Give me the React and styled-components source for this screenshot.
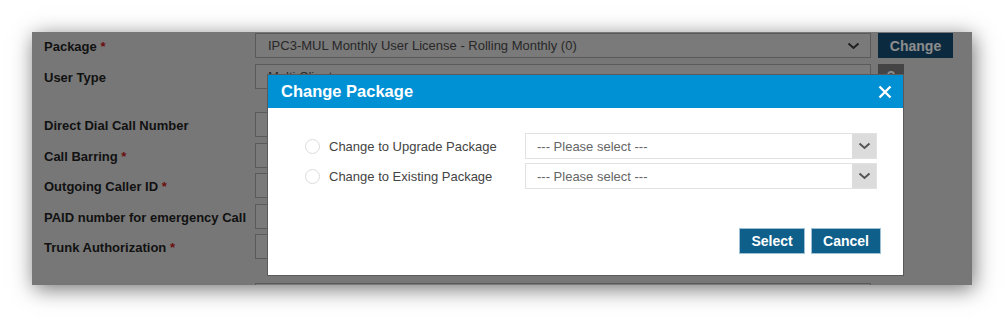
import React from 'react'
import styled, { createGlobalStyle } from 'styled-components'

const Global = createGlobalStyle`
  html, body { margin: 0; padding: 0; background: #fff; }
  body { font-family: "Liberation Sans", Arial, sans-serif; }
`

const Frame = styled.div`
  width: 1004px;
  height: 318px;
  padding: 32px 0 0 32px;
  box-sizing: border-box;
  overflow: hidden;
`

const Panel = styled.div`
  position: relative;
  width: 940px;
  height: 253px;
  background: #d9d9d9;
  box-shadow: 2px 4px 20px rgba(0, 0, 0, 0.55);
  overflow: hidden;
`

const Form = styled.div`
  display: grid;
  grid-template-columns: 204px 616px 82px;
  column-gap: 7px;
  padding: 1px 0 0 12px;
`

const Row = styled.div`
  display: contents;
`

const Label = styled.div`
  height: ${p => (p.tall ? 48.5 : 30.5)}px;
  box-sizing: border-box;
  padding-top: 6px;
  font-size: 13px;
  font-weight: bold;
  color: #1f1f1f;
  line-height: 15px;
  white-space: nowrap;
  span { color: #c31b1b; }
`

const Cell = styled.div`
  height: ${p => (p.tall ? 48.5 : 30.5)}px;
`

const Field = styled.div`
  display: flex;
  align-items: center;
  justify-content: space-between;
  height: 25px;
  box-sizing: border-box;
  border: 1px solid #a4a4a4;
  background: #dedede;
  padding: 0 10px 0 12px;
  font-size: 13px;
  color: #4a4a4a;
`

const DarkButton = styled.div`
  display: flex;
  align-items: center;
  justify-content: center;
  width: ${p => p.w}px;
  height: 25px;
  background: ${p => p.bg};
  color: #fff;
  font-size: 14px;
  font-weight: bold;
`

const Dim = styled.div`
  position: absolute;
  inset: 0;
  background: rgba(0, 0, 0, 0.45);
`

const Modal = styled.div`
  position: absolute;
  left: 235px;
  top: 42px;
  width: 637px;
  height: 202px;
  box-sizing: border-box;
  border: 1px solid #5a5a5a;
  background: #fff;
  display: flex;
  flex-direction: column;
`

const Header = styled.div`
  display: flex;
  align-items: center;
  justify-content: space-between;
  height: 33px;
  padding: 0 11px 0 13px;
  background: #0090d4;
  color: #fff;
  font-size: 16.5px;
  font-weight: bold;
`

const Body = styled.div`
  flex: 1;
  display: flex;
  flex-direction: column;
  padding: 25px 26px 21px 37px;
`

const Option = styled.div`
  display: flex;
  align-items: center;
  height: 26px;
  margin-bottom: 4px;
`

const Radio = styled.span`
  width: 15px;
  height: 15px;
  box-sizing: border-box;
  border: 1px solid #dcdcdc;
  border-radius: 50%;
  margin-right: 9px;
`

const OptionLabel = styled.span`
  width: 196px;
  font-size: 13px;
  color: #444;
`

const Select = styled.div`
  flex: 1;
  display: flex;
  height: 26px;
  box-sizing: border-box;
  border: 1px solid #e2e2e2;
`

const SelectText = styled.div`
  flex: 1;
  display: flex;
  align-items: center;
  padding-left: 11px;
  font-size: 13px;
  color: #666;
`

const Arrow = styled.div`
  width: 24px;
  display: flex;
  align-items: center;
  justify-content: center;
  background: #dcdcdc;
`

const Actions = styled.div`
  margin: auto -4px 0 0;
  display: flex;
  justify-content: flex-end;
  gap: 6px;
`

const Btn = styled.button`
  width: ${p => p.w}px;
  height: 26px;
  border: 1px solid #9fc0d4;
  background: #0e5f8a;
  color: #fff;
  font-family: "Liberation Sans", Arial, sans-serif;
  font-size: 14px;
  font-weight: bold;
  padding: 0;
`

const Chevron = ({ color = '#555' }) => (
  <svg width="13" height="8" viewBox="0 0 13 8">
    <path d="M1.5 1.5 L6.5 6 L11.5 1.5" fill="none" stroke={color} strokeWidth="2" />
  </svg>
)

const rows = [
  { label: 'Package', req: true, value: 'IPC3-MUL Monthly User License - Rolling Monthly (0)', chevron: true, btn: 'change' },
  { label: 'User Type', value: 'Multi Client', tall: true, btn: 'help' },
  { label: 'Direct Dial Call Number' },
  { label: 'Call Barring', req: true },
  { label: 'Outgoing Caller ID', req: true },
  { label: 'PAID number for emergency Call' },
  { label: 'Trunk Authorization', req: true, tall: true },
  { label: '' },
]

export default function App() {
  return (
    <Frame>
      <Global />
      <Panel>
        <Form>
          {rows.map((r, i) => (
            <Row key={i}>
              <Label tall={r.tall}>
                {r.label}
                {r.req && <span> *</span>}
              </Label>
              <Cell tall={r.tall}>
                <Field>
                  <span>{r.value}</span>
                  {r.chevron && <Chevron color="#3a3a3a" />}
                </Field>
              </Cell>
              <Cell tall={r.tall}>
                {r.btn === 'change' && <DarkButton w={75} bg="#144e74">Change</DarkButton>}
                {r.btn === 'help' && <DarkButton w={26} bg="#7c7c7c">?</DarkButton>}
              </Cell>
            </Row>
          ))}
        </Form>
        <Dim />
        <Modal>
          <Header>
            Change Package
            <svg width="14" height="14" viewBox="0 0 14 14">
              <path d="M1.5 1.5 L12.5 12.5 M12.5 1.5 L1.5 12.5" stroke="#fff" strokeWidth="2.4" />
            </svg>
          </Header>
          <Body>
            {['Change to Upgrade Package', 'Change to Existing Package'].map(t => (
              <Option key={t}>
                <Radio />
                <OptionLabel>{t}</OptionLabel>
                <Select>
                  <SelectText>--- Please select ---</SelectText>
                  <Arrow>
                    <Chevron />
                  </Arrow>
                </Select>
              </Option>
            ))}
            <Actions>
              <Btn w={66}>Select</Btn>
              <Btn w={70}>Cancel</Btn>
            </Actions>
          </Body>
        </Modal>
      </Panel>
    </Frame>
  )
}
